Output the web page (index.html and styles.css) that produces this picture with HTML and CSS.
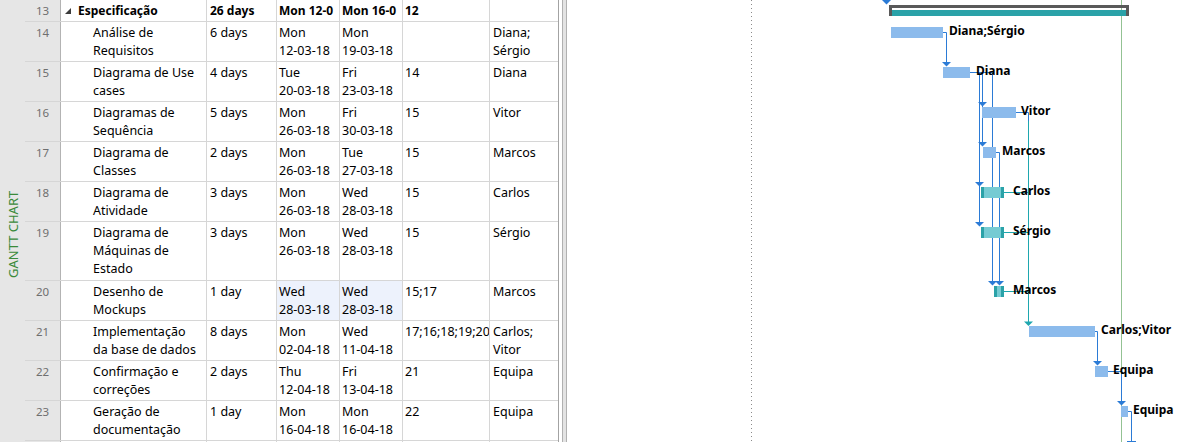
FILE: index.html
```html
<!DOCTYPE html>
<html lang="pt">
<head>
<meta charset="utf-8">
<title>Gantt Chart</title>
<link rel="stylesheet" href="styles.css">
</head>
<body>
<div class="app">
  <aside class="side"><span class="side-label">GANTT CHART</span></aside>
  <div class="sheet">
    <div class="row row-summary">
      <div class="c num">13</div>
      <div class="c name name-summary"><svg class="tri" width="7" height="6" viewBox="0 0 7 6"><polygon points="6,0 6,6 0,6" fill="#3c3c3c"/></svg>Especificação</div>
      <div class="c dur">26 days</div>
      <div class="c start">Mon 12-0</div>
      <div class="c finish">Mon 16-0</div>
      <div class="c pred">12</div>
      <div class="c res"></div>
    </div>
    <div class="row">
      <div class="c num">14</div>
      <div class="c name">Análise de<br>Requisitos</div>
      <div class="c dur">6 days</div>
      <div class="c start">Mon<br>12-03-18</div>
      <div class="c finish">Mon<br>19-03-18</div>
      <div class="c pred"></div>
      <div class="c res">Diana;<br>Sérgio</div>
    </div>
    <div class="row">
      <div class="c num">15</div>
      <div class="c name">Diagrama de Use<br>cases</div>
      <div class="c dur">4 days</div>
      <div class="c start">Tue<br>20-03-18</div>
      <div class="c finish">Fri<br>23-03-18</div>
      <div class="c pred">14</div>
      <div class="c res">Diana</div>
    </div>
    <div class="row">
      <div class="c num">16</div>
      <div class="c name">Diagramas de<br>Sequência</div>
      <div class="c dur">5 days</div>
      <div class="c start">Mon<br>26-03-18</div>
      <div class="c finish">Fri<br>30-03-18</div>
      <div class="c pred">15</div>
      <div class="c res">Vitor</div>
    </div>
    <div class="row">
      <div class="c num">17</div>
      <div class="c name">Diagrama de<br>Classes</div>
      <div class="c dur">2 days</div>
      <div class="c start">Mon<br>26-03-18</div>
      <div class="c finish">Tue<br>27-03-18</div>
      <div class="c pred">15</div>
      <div class="c res">Marcos</div>
    </div>
    <div class="row">
      <div class="c num">18</div>
      <div class="c name">Diagrama de<br>Atividade</div>
      <div class="c dur">3 days</div>
      <div class="c start">Mon<br>26-03-18</div>
      <div class="c finish">Wed<br>28-03-18</div>
      <div class="c pred">15</div>
      <div class="c res">Carlos</div>
    </div>
    <div class="row row-tall">
      <div class="c num">19</div>
      <div class="c name">Diagrama de<br>Máquinas de<br>Estado</div>
      <div class="c dur">3 days</div>
      <div class="c start">Mon<br>26-03-18</div>
      <div class="c finish">Wed<br>28-03-18</div>
      <div class="c pred">15</div>
      <div class="c res">Sérgio</div>
    </div>
    <div class="row">
      <div class="c num">20</div>
      <div class="c name">Desenho de<br>Mockups</div>
      <div class="c dur">1 day</div>
      <div class="c start hl">Wed<br>28-03-18</div>
      <div class="c finish hl">Wed<br>28-03-18</div>
      <div class="c pred">15;17</div>
      <div class="c res">Marcos</div>
    </div>
    <div class="row">
      <div class="c num">21</div>
      <div class="c name">Implementação<br>da base de dados</div>
      <div class="c dur">8 days</div>
      <div class="c start">Mon<br>02-04-18</div>
      <div class="c finish">Wed<br>11-04-18</div>
      <div class="c pred">17;16;18;19;20</div>
      <div class="c res">Carlos;<br>Vitor</div>
    </div>
    <div class="row">
      <div class="c num">22</div>
      <div class="c name">Confirmação e<br>correções</div>
      <div class="c dur">2 days</div>
      <div class="c start">Thu<br>12-04-18</div>
      <div class="c finish">Fri<br>13-04-18</div>
      <div class="c pred">21</div>
      <div class="c res">Equipa</div>
    </div>
    <div class="row">
      <div class="c num">23</div>
      <div class="c name">Geração de<br>documentação</div>
      <div class="c dur">1 day</div>
      <div class="c start">Mon<br>16-04-18</div>
      <div class="c finish">Mon<br>16-04-18</div>
      <div class="c pred">22</div>
      <div class="c res">Equipa</div>
    </div>
    <div class="row">
      <div class="c num"></div>
      <div class="c name"></div>
      <div class="c dur"></div>
      <div class="c start"></div>
      <div class="c finish"></div>
      <div class="c pred"></div>
      <div class="c res"></div>
    </div>
  </div>
  <div class="splitter"><div class="splitter-bar"></div></div>
  <div class="chart">
    <svg class="chart-svg" width="618" height="442" viewBox="567 0 618 442">
      <!-- timescale guides -->
      <line x1="751.5" y1="0" x2="751.5" y2="442" stroke="#8a8a8a" stroke-width="1" stroke-dasharray="1 3"/>
      <line x1="1121.5" y1="0" x2="1121.5" y2="442" stroke="#93c293" stroke-width="1"/>

      <!-- summary task 13 -->
      <polygon points="882,0 891,0 886.5,4.5" fill="#2b7bd6"/>
      <rect x="892" y="10" width="234" height="6" fill="#2aa2a8"/>
      <rect x="889" y="5" width="240" height="3" fill="#595959"/>
      <rect x="889" y="5" width="3" height="11" fill="#595959"/>
      <rect x="1126" y="5" width="3" height="11" fill="#595959"/>

      <!-- blue connectors -->
      <g fill="none" stroke="#2b7bd6" stroke-width="1">
        <path d="M943 32.5 H946.5 V62"/>
        <path d="M970 72.5 H993"/>
        <path d="M979.5 72 V222"/>
        <path d="M982.5 72 V142"/>
        <path d="M992.5 72 V281"/>
        <path d="M1016 112.5 H1028.5 V121"/>
        <path d="M996 152.5 H999.5 V281"/>
        <path d="M1095 331.5 H1097.5 V361"/>
        <path d="M1108 371.5 H1121.5 V401"/>
        <path d="M1128 411.5 H1131.5 V442"/>
        <path d="M1127 441.5 H1136"/>
      </g>
      <!-- teal connectors -->
      <g fill="none" stroke="#1ea7af" stroke-width="1">
        <path d="M1028.5 121 V322"/>
        <path d="M1004 192.5 H1028.5"/>
        <path d="M1004 232.5 H1028.5"/>
        <path d="M1004 291.5 H1028.5"/>
      </g>
      <!-- arrowheads -->
      <g fill="#2b7bd6">
        <polygon points="942,62 951,62 946.5,66.5"/>
        <polygon points="978,102 987,102 982.5,106.5"/>
        <polygon points="978,142 987,142 982.5,146.5"/>
        <polygon points="975,182 984,182 979.5,186.5"/>
        <polygon points="975,222 984,222 979.5,226.5"/>
        <polygon points="988,281 997,281 992.5,285.5"/>
        <polygon points="995,281 1004,281 999.5,285.5"/>
        <polygon points="1093,361 1102,361 1097.5,365.5"/>
        <polygon points="1117,401 1126,401 1121.5,405.5"/>
      </g>
      <polygon points="1024,321.5 1033,321.5 1028.5,326" fill="#1ea7af"/>

      <!-- task bars -->
      <g fill="#8cbbec">
        <rect x="891" y="27" width="52" height="11"/>
        <rect x="943" y="67" width="27" height="11"/>
        <rect x="982" y="107" width="34" height="11"/>
        <rect x="983" y="147" width="13" height="11"/>
        <rect x="1029" y="326" width="66" height="11"/>
        <rect x="1095" y="366" width="13" height="11"/>
        <rect x="1121" y="406" width="7" height="11"/>
      </g>
      <g>
        <rect x="981" y="187" width="23" height="11" fill="#2aa2a8"/>
        <rect x="984" y="187" width="17" height="11" fill="#76cbd3"/>
        <rect x="981" y="227" width="23" height="11" fill="#2aa2a8"/>
        <rect x="984" y="227" width="17" height="11" fill="#76cbd3"/>
        <rect x="994" y="286" width="10" height="11" fill="#2aa2a8"/>
        <rect x="997" y="286" width="4" height="11" fill="#76cbd3"/>
      </g>

      <!-- resource labels -->
      <g class="bar-label">
        <text x="949" y="35">Diana;Sérgio</text>
        <text x="976" y="75">Diana</text>
        <text x="1021" y="115">Vitor</text>
        <text x="1002" y="155">Marcos</text>
        <text x="1013" y="195">Carlos</text>
        <text x="1013" y="235">Sérgio</text>
        <text x="1013" y="294">Marcos</text>
        <text x="1101" y="334">Carlos;Vitor</text>
        <text x="1113" y="374">Equipa</text>
        <text x="1133" y="414">Equipa</text>
      </g>
    </svg>
  </div>
</div>
</body>
</html>
```

FILE: styles.css
```css
html, body {
  margin: 0;
  padding: 0;
  background: #ffffff;
}

.app {
  display: flex;
  width: 1185px;
  height: 442px;
  overflow: hidden;
  font-family: "Noto Sans", "Open Sans", sans-serif;
  color: #000;
}

/* left vertical view label */
.side {
  flex: 0 0 25px;
  background: #e6e6e6;
  display: flex;
  justify-content: center;
  padding-top: 190px;
  box-sizing: border-box;
}

.side-label {
  writing-mode: vertical-rl;
  transform: rotate(180deg);
  color: #3a8a3a;
  font-size: 13px;
  line-height: 14px;
  height: 88px;
  white-space: nowrap;
}

/* task sheet */
.sheet {
  flex: 0 0 534px;
  box-sizing: border-box;
  border-right: 1px solid #a3a3a3;
  display: flex;
  flex-direction: column;
}

.row {
  display: flex;
  flex: 0 0 auto;
  height: 40px;
  box-sizing: border-box;
  border-bottom: 1px solid #d6d6d6;
}

.row-summary {
  height: 22px;
  font-weight: 700;
  font-size: 12px;
}

.row-tall {
  height: 59px;
}

.c {
  box-sizing: border-box;
  border-right: 1px solid #d6d6d6;
  padding: 2px 2px 0 2px;
  line-height: 18px;
  font-size: 12.5px;
  white-space: nowrap;
  overflow: hidden;
}

.row-summary .c {
  font-size: 12px;
}

.num {
  flex: 0 0 36px;
  background: #e6e6e6;
  border-right-color: #b3b3b3;
  color: #6f6f6f;
  text-align: center;
  font-size: 11.5px;
  font-weight: 400;
}

.row-summary .num {
  font-size: 11.5px;
  font-weight: 400;
}

.name {
  flex: 0 0 146px;
  padding-left: 32px;
}

.name-summary {
  padding-left: 4px;
}

.tri {
  display: inline-block;
  vertical-align: 1px;
  margin-right: 6px;
}

.dur { flex: 0 0 70px; padding-left: 3px; }
.start { flex: 0 0 63px; }
.finish { flex: 0 0 63px; }
.pred { flex: 0 0 87px; }
.res { flex: 0 0 68px; border-right: 0; padding-left: 3px; }

.hl {
  background: #edf2fc;
}

/* pane splitter */
.splitter {
  flex: 0 0 8px;
  display: flex;
  justify-content: flex-end;
}

.splitter-bar {
  width: 3px;
  border-left: 1px solid #b0b0b0;
  border-right: 1px solid #b0b0b0;
  background: #e3e3e3;
}

/* gantt chart pane */
.chart {
  flex: 1 1 auto;
  position: relative;
  background: #fff;
}

.chart-svg {
  display: block;
}

.bar-label text {
  font-family: "Noto Sans", "Open Sans", sans-serif;
  font-weight: 700;
  font-size: 12px;
  fill: #000;
}
```
